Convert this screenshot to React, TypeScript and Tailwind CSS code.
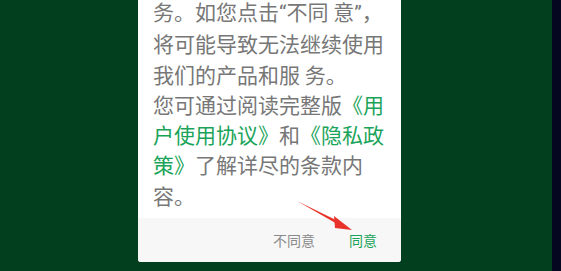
export default function App() {
  const lines: { text: string; green?: boolean; latin?: boolean }[][] = [
    [
      { text: '务。如您点击' },
      { text: '“', latin: true },
      { text: '不同 意' },
      { text: '”', latin: true },
      { text: '，' },
    ],
    [{ text: '将可能导致无法继续使用' }],
    [{ text: '我们的产品和服 务。' }],
    [{ text: '您可通过阅读完整版' }, { text: '《用', green: true }],
    [{ text: '户使用协议》', green: true }, { text: '和' }, { text: '《隐私政', green: true }],
    [{ text: '策》', green: true }, { text: '了解详尽的条款内' }],
    [{ text: '容。' }],
  ]

  return (
    <div
      className="flex h-[271px] w-[561px] overflow-hidden bg-[#013f1f]"
      style={{ fontFamily: '"Noto Sans CJK SC", "Noto Sans", sans-serif' }}
    >
      <div className="flex flex-1 justify-start pl-[138px]">
        <div className="relative flex h-[262px] w-[263px] flex-col overflow-hidden rounded-b-[3px] bg-white">
          <div className="-mt-[4px] flex-1 pl-[15px] text-[21px] leading-[30.3px] text-[#777777]">
            {lines.map((line, i) => (
              <div key={i} className="whitespace-pre">
                {line.map((seg, j) => (
                  <span
                    key={j}
                    className={
                      seg.green
                        ? 'text-[#1aa45a]'
                        : seg.latin
                          ? 'font-["Roboto",sans-serif]'
                          : undefined
                    }
                  >
                    {seg.text}
                  </span>
                ))}
              </div>
            ))}
          </div>
          <div className="flex h-[44px] items-center justify-end gap-[34px] bg-[#f7f7f7] pr-[24px] text-[14px]">
            <span className="text-[#8a8a8a]">不同意</span>
            <span className="text-[#1aa45a]">同意</span>
          </div>
          <svg
            className="absolute left-[158px] top-[199px]"
            width="60"
            height="34"
            viewBox="0 0 60 34"
          >
            <path d="M1 2 L44 23 L43 26 Z" fill="#e8332a" />
            <path d="M38 17 L56 31 L39 29 Z" fill="#e8332a" />
          </svg>
        </div>
      </div>
      <div className="w-[9px] bg-[#050720]" />
    </div>
  )
}
